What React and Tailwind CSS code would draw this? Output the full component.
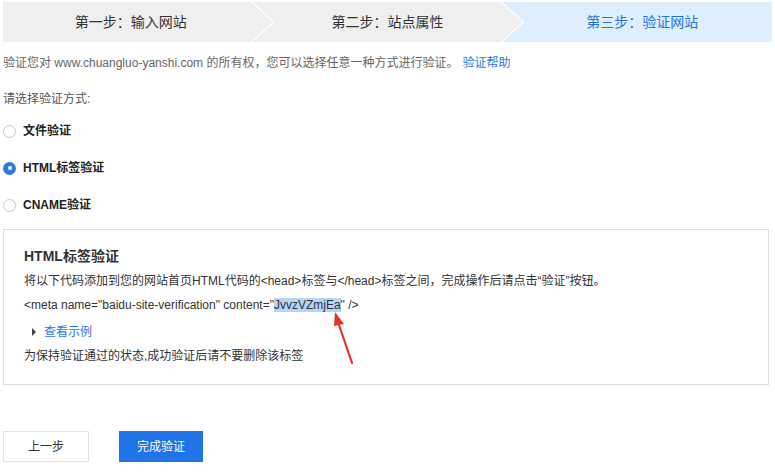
import React, { useState } from "react";

const font = "font-['Liberation_Sans','Noto_Sans_CJK_SC',sans-serif]";

const steps = ["第一步：输入网站", "第二步：站点属性", "第三步：验证网站"];

const Radio = ({ checked, label, onClick }) => (
  <div className="flex items-center h-[18px] cursor-pointer" onClick={onClick}>
    {checked ? (
      <span className="w-[13px] h-[13px] rounded-full bg-[#2d7ce6] flex items-center justify-center">
        <span className="w-[4px] h-[4px] rounded-full bg-white" />
      </span>
    ) : (
      <span className="w-[13px] h-[13px] rounded-full border border-[#c8c8c8] bg-white" />
    )}
    <span className="ml-[7px] text-[12px] font-bold text-[#222]">{label}</span>
  </div>
);

export default function App() {
  const [method, setMethod] = useState("html");

  return (
    <div className={`${font} w-[775px] h-[475px] bg-white px-[3px] relative overflow-hidden`}>
      {/* Steps */}
      <div className="flex mt-[2px] h-[40px]">
        <div className="flex-1 bg-[#efefef] flex items-center justify-center text-[14px] text-[#333] [clip-path:polygon(0_0,calc(100%-22px)_0,100%_50%,calc(100%-22px)_100%,0_100%)]">
          <span className="pr-[14px]">{steps[0]}</span>
        </div>
        <div className="flex-1 -ml-[20px] bg-[#efefef] flex items-center justify-center text-[14px] text-[#333] [clip-path:polygon(0_0,calc(100%-22px)_0,100%_50%,calc(100%-22px)_100%,0_100%,22px_50%)]">
          <span>{steps[1]}</span>
        </div>
        <div className="flex-1 -ml-[20px] bg-[#dfeefd] flex items-center justify-center text-[14px] text-[#1f74dd] [clip-path:polygon(0_0,100%_0,100%_100%,0_100%,22px_50%)]">
          <span className="pl-[10px]">{steps[2]}</span>
        </div>
      </div>

      <p className="mt-[12px] text-[12px] leading-[18px] text-[#666]">
        验证您对 www.chuangluo-yanshi.com 的所有权，您可以选择任意一种方式进行验证。
        <a className="ml-[4px] text-[#2b78e4]" href="#">验证帮助</a>
      </p>
      <p className="mt-[18px] text-[12px] leading-[18px] text-[#555]">请选择验证方式:</p>

      <div className="mt-[14px]">
        <Radio label="文件验证" checked={method === "file"} onClick={() => setMethod("file")} />
      </div>
      <div className="mt-[19px]">
        <Radio label="HTML标签验证" checked={method === "html"} onClick={() => setMethod("html")} />
      </div>
      <div className="mt-[19px]">
        <Radio label="CNAME验证" checked={method === "cname"} onClick={() => setMethod("cname")} />
      </div>

      {/* Verification box */}
      <div className="mt-[15px] w-[766px] border border-[#dddddd] pl-[20px] pt-[16px] pb-[19px] relative">
        <h3 className="text-[14px] leading-[20px] font-bold text-[#333]">HTML标签验证</h3>
        <p className="mt-[6px] text-[12px] leading-[18px] text-[#333]">
          将以下代码添加到您的网站首页HTML代码的&lt;head&gt;标签与&lt;/head&gt;标签之间，完成操作后请点击“验证”按钮。
        </p>
        <p className="mt-[6px] text-[12px] leading-[18px] text-[#333]">
          &lt;meta name="baidu-site-verification" content="<span className="bg-[#b3d4fc]">JvvzVZmjEa</span>" /&gt;
        </p>
        <div className="mt-[9px] flex items-center text-[12px] leading-[18px]">
          <span className="ml-[8px] w-0 h-0 border-y-[4px] border-y-transparent border-l-[4px] border-l-[#444]" />
          <a className="ml-[8px] text-[#2b78e4]" href="#">查看示例</a>
        </div>
        <p className="mt-[6px] text-[12px] leading-[18px] text-[#333]">为保持验证通过的状态,成功验证后请不要删除该标签</p>

        {/* red annotation arrow */}
        <svg className="absolute left-[322px] top-[78px]" width="36" height="62" viewBox="0 0 36 62">
          <line x1="26" y1="55" x2="12" y2="14" stroke="#e8302a" strokeWidth="2.2" strokeLinecap="round" />
          <polygon points="9,4 18,16 8,18" fill="#e8302a" />
        </svg>
      </div>

      {/* Buttons */}
      <div className="mt-[46px] flex gap-[30px]">
        <button className="w-[86px] h-[31px] border border-[#e3e3e3] bg-white text-[12px] text-[#333]">上一步</button>
        <button className="w-[84px] h-[31px] bg-[#1f74e6] text-[12px] text-white">完成验证</button>
      </div>
    </div>
  );
}
